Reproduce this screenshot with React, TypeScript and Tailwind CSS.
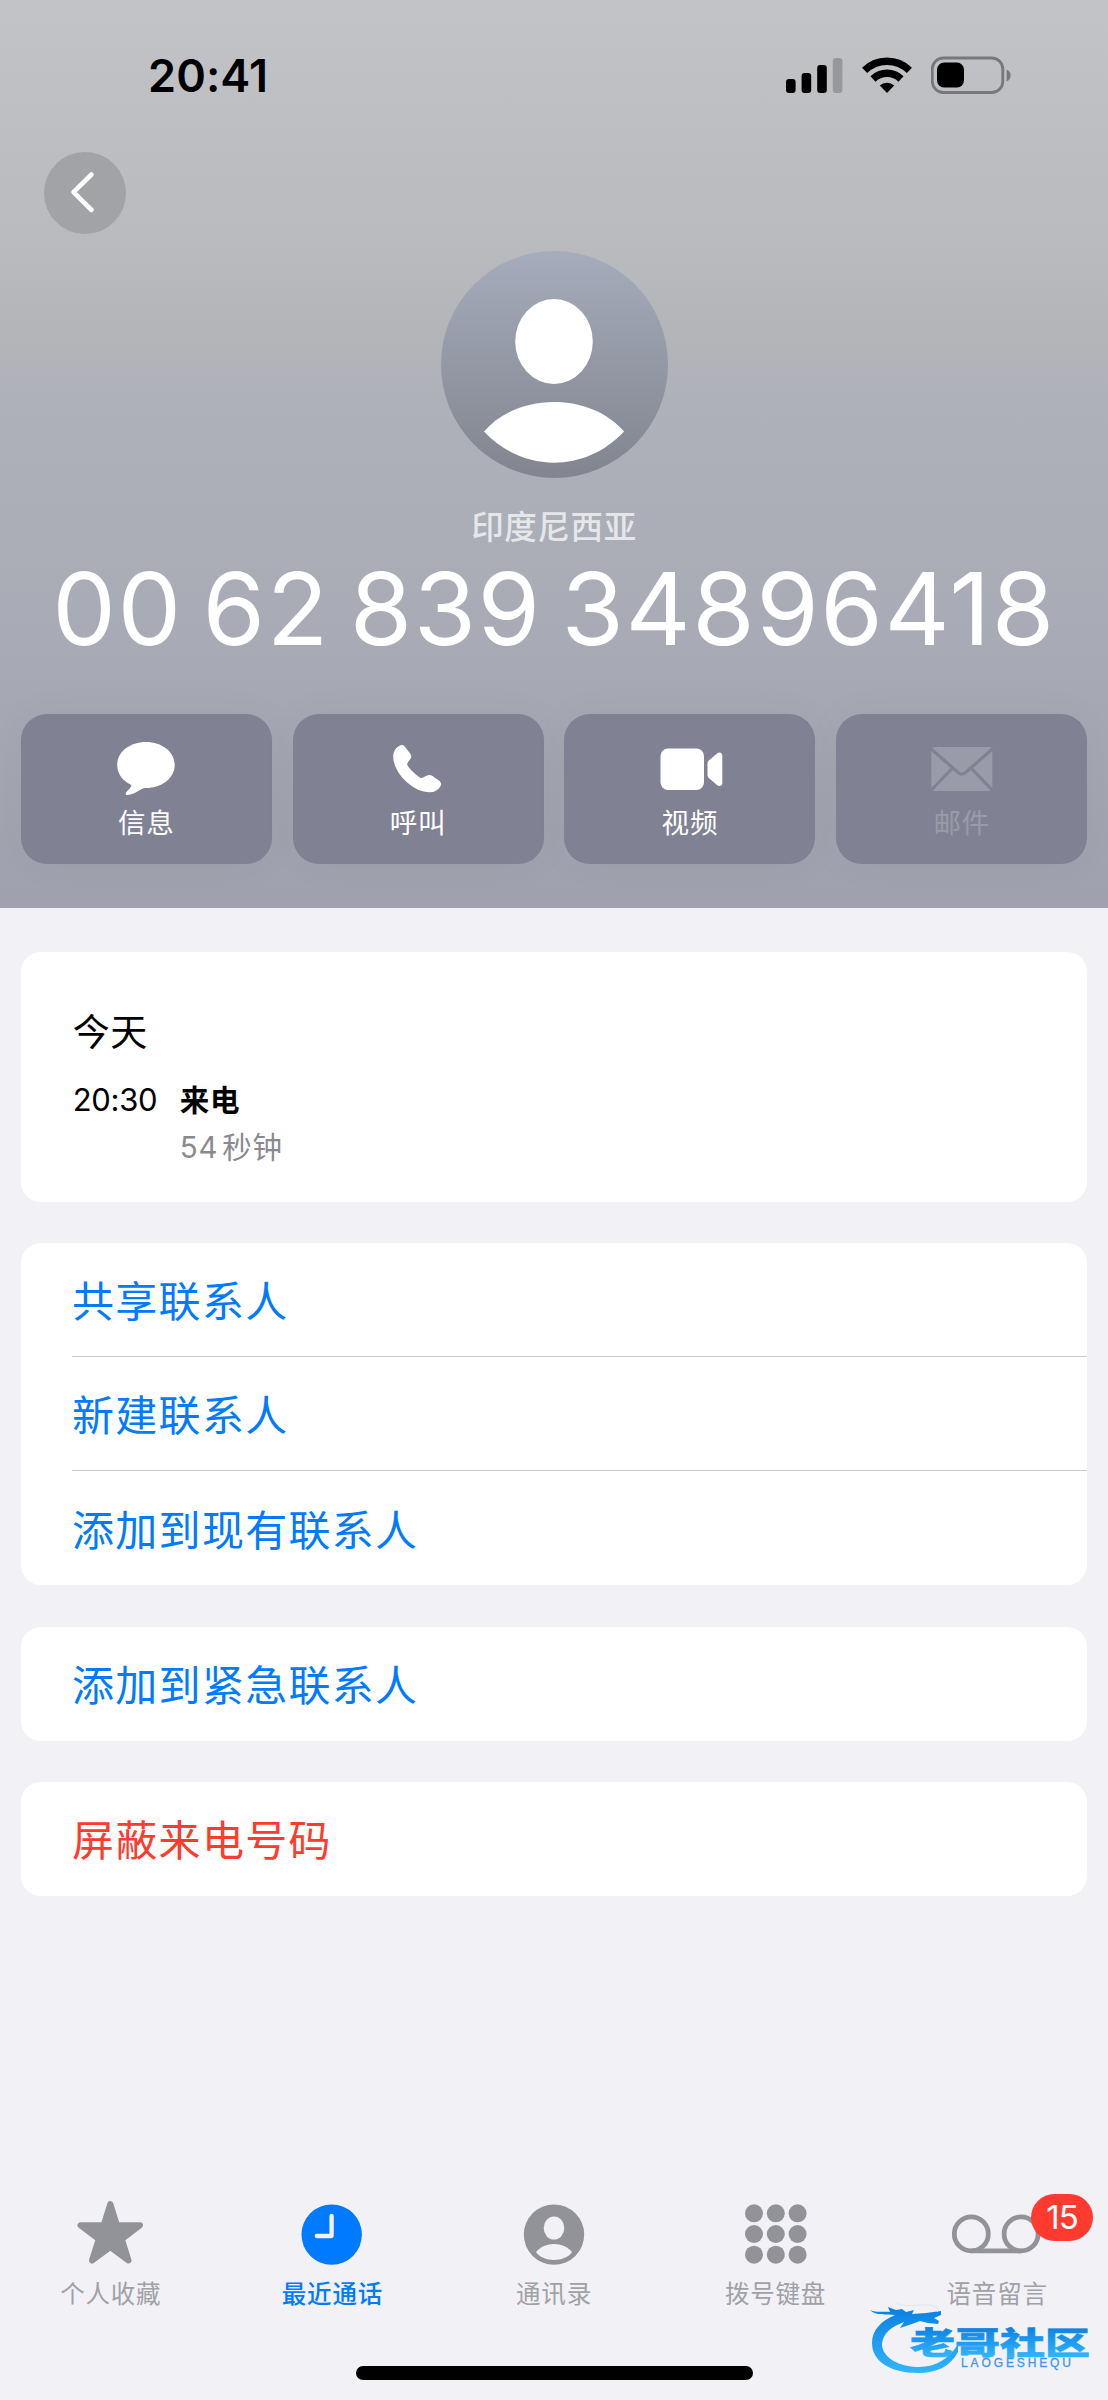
import type { ReactNode } from "react";

function StatusBar() {
  return (
    <div className="flex h-[150px] items-center justify-between pl-[148px] pr-[96px]">
      <span className="pt-px text-[45px] font-semibold leading-none tracking-[0.1px] text-black">
        20:41
      </span>
      <div className="flex items-center">
        {/* signal */}
        <svg width="57" height="36" viewBox="0 0 57 36">
          <rect x="0" y="22" width="9.6" height="14" rx="3" />
          <rect x="15.6" y="16" width="9.6" height="20" rx="3" />
          <rect x="31.2" y="8" width="9.6" height="28" rx="3" />
          <rect x="46.8" y="1" width="9.6" height="35" rx="3" fill="#97989c" />
        </svg>
        {/* wifi */}
        <svg
          className="ml-[19px]"
          width="50"
          height="36"
          viewBox="0 0 50 36"
          fill="none"
          stroke="black"
          strokeWidth="7.4"
        >
          <path d="M2.6 13.4a32 32 0 0 1 44.8 0" />
          <path d="M11 22a20 20 0 0 1 28 0" />
          <path d="M25 36l-7.2-7.4a10.4 10.4 0 0 1 14.4 0z" fill="black" stroke="none" />
        </svg>
        {/* battery */}
        <svg className="ml-[19px]" width="81" height="38" viewBox="0 0 81 38">
          <rect
            x="1.3"
            y="2"
            width="70.5"
            height="34.5"
            rx="11"
            fill="none"
            stroke="#77787b"
            strokeWidth="2.8"
          />
          <rect x="6" y="6.6" width="27" height="25" rx="7" />
          <path d="M75.6 13.5c5.4 2 5.4 10 0 12z" fill="#77787b" />
        </svg>
      </div>
    </div>
  );
}

type ActionProps = { label: string; disabled?: boolean; children: ReactNode };

function Action({ label, disabled, children }: ActionProps) {
  return (
    <button
      className={`flex h-[150px] flex-1 flex-col items-center rounded-[26px] bg-[#808293] pt-[26px] shadow-[0_0_40px_rgba(0,0,0,0.04)] ${
        disabled ? "text-[#999ba8]" : "text-white"
      }`}
    >
      <svg
        className="overflow-visible"
        width="64"
        height="56"
        viewBox="0 0 64 56"
        fill="currentColor"
      >
        {children}
      </svg>
      <span className="mt-[7px] text-[27.5px] leading-10 tracking-[0.8px]">{label}</span>
    </button>
  );
}

function Header() {
  return (
    <header className="h-[908px] bg-[linear-gradient(180deg,#c2c3c7_0%,#b9babe_28%,#b3b4b8_38%,#afb1ba_44%,#a8aab5_70%,#9fa1ae_100%)]">
      <StatusBar />
      {/* back */}
      <div className="pl-11 pt-0.5">
        <button className="flex size-[82px] items-center justify-center rounded-full bg-[#a2a3a7]">
          <svg width="82" height="82" viewBox="0 0 82 82" fill="none">
            <path
              d="M47.5 22.5L29.5 40.2L47.5 58"
              stroke="white"
              strokeWidth="4.6"
              strokeLinecap="round"
              strokeLinejoin="round"
            />
          </svg>
        </button>
      </div>
      {/* contact */}
      <div className="flex flex-col items-center">
        <div className="mt-[17px] size-[227px] rounded-full bg-linear-to-b from-[#a5acbb] to-[#82858f]">
          <svg width="227" height="227" viewBox="0 0 227 227" fill="white">
            <ellipse cx="113" cy="90.5" rx="38.8" ry="42.5" />
            <path d="M43 180.5C76.500 141 149.500 141 183 180.500C144.500 222 81.500 222 43 180.500Z" />
          </svg>
        </div>
        <p className="mt-[30px] text-[32.5px] font-medium leading-10 tracking-[0.6px] text-[#e6e7ea]">
          印度尼西亚
        </p>
        <h1 className="mt-2.5 whitespace-nowrap text-[101px] font-[380] leading-[100px] tracking-[1.5px] [word-spacing:-10px] text-white">
          00 62 839 34896418
        </h1>
      </div>
      {/* actions */}
      <div className="mt-14 flex gap-[20.7px] px-[20.7px]">
        <Action label="信息">
          <path d="M17.4 45C8.5 40.8 3.2 33.8 3.2 25C3.2 12 15.8 2 32 2s28.7 10 28.7 23S48 48 32 48c-1.6 0-2.8 .1-4.2 .9C23 51.7 18.5 54.5 13.7 55c-2.2 .1-2.5-1.4-1.2-2.9C14.3 50 17.5 47.5 17.4 45Z" />
        </Action>
        <Action label="呼叫">
          <path d="M18.5 6.2C17 4.6 15 4.8 13 6C9 8.5 7.2 12 7.2 16.5C7.2 33 27 52.3 43.6 52.3C48.5 52.3 52 50.3 54.3 46.5C55.5 44.5 55.3 42.6 53.5 41L46.5 36C44.5 34.7 42.8 34.8 41 35.6L37 37.6C35.6 38.3 34.7 38.2 33.5 37.2C29 34 24.5 29.8 21.8 26C21 24.8 21 24 21.7 22.7L24.6 18.6C25.6 17 25.4 15.5 24.5 14Z" />
        </Action>
        <Action label="视频">
          <rect x="2.5" y="8.6" width="43.5" height="41.4" rx="7.5" />
          <path d="M49.5 23.5q0-1.7 1.3-2.9L59 13.6q1.5-1.1 3-1t2.3 2.4V43.7q-.5 2.3-2.3 2.4t-3-1L50.8 38q-1.3-1.2-1.3-2.9Z" />
        </Action>
        <Action label="邮件" disabled>
          <rect x="1.3" y="7" width="61" height="44" rx="3" />
          <path
            d="M0 8L27.5 32Q31.8 36.500 36.100 32L63.600 8M22.500 28L0 51.500M41 28L63.600 51.500"
            fill="none"
            stroke="#808293"
            strokeWidth="3.2"
          />
        </Action>
      </div>
    </header>
  );
}

function CallLog() {
  return (
    <section className="h-[250px] rounded-[20px] bg-white px-[52px] pt-[57px] text-black">
      <h2 className="text-[37px] leading-[48px] tracking-[0.5px]">今天</h2>
      <div className="mt-[20.5px] flex leading-[44px]">
        <span className="w-[107px] text-[31px] tracking-[-0.3px]">20:30</span>
        <div className="flex flex-col gap-[3px]">
          <span className="text-[29.5px] font-semibold tracking-[0.8px]">来电</span>
          <span className="text-[29.5px] tracking-[0.8px] text-[#8a8a8e]">
            54<span className="ml-1">秒钟</span>
          </span>
        </div>
      </div>
    </section>
  );
}

function LinkGroup({ items, danger }: { items: string[]; danger?: boolean }) {
  return (
    <ul
      className={`rounded-[20px] bg-white pl-[51.3px] text-[42px] tracking-[1.3px] ${
        danger ? "text-[#ff3b30]" : "text-[#007aff]"
      }`}
    >
      {items.map((item) => (
        <li
          key={item}
          className="flex h-[114px] items-center border-b border-[#c8c8ca] pt-1 last:border-0"
        >
          {item}
        </li>
      ))}
    </ul>
  );
}

type TabProps = { label: string; active?: boolean; wide?: boolean; badge?: string; children: ReactNode };

function Tab({ label, active, wide, badge, children }: TabProps) {
  return (
    <button
      className={`flex flex-1 flex-col items-center ${active ? "text-[#007aff]" : "text-[#929398]"}`}
    >
      <div className="relative">
        <svg
          width={wide ? 92 : 72}
          height="72"
          viewBox={wide ? "0 0 92 72" : "0 0 72 72"}
          fill="currentColor"
        >
          {children}
        </svg>
        {badge && (
          <span className="absolute -top-0.5 left-20 h-[47px] w-[62px] rounded-full bg-[#ff3b30] text-center text-[33px] leading-[46px] tracking-[-0.8px] text-white">
            {badge}
          </span>
        )}
      </div>
      <span
        className={`mt-2.5 text-[24.5px] leading-8 tracking-[0.8px] ${
          active ? "font-medium" : "text-[#a0a1a6]"
        }`}
      >
        {label}
      </span>
    </button>
  );
}

const dots = [17.3, 38, 58.7];

function TabBar() {
  return (
    <nav className="flex">
      <Tab label="个人收藏">
        <path
          d="M35.3 8L42 29.3H65L46.8 43L53.5 64.5L35.3 51L17 64.5L23.800 43L5.500 29.300H28.600Z"
          stroke="currentColor"
          strokeWidth="6"
          strokeLinejoin="round"
        />
      </Tab>
      <Tab label="最近通话" active>
        <circle cx="35.7" cy="38.6" r="30.2" />
        <path
          d="M35.6 20V40H20.8"
          fill="none"
          stroke="#f2f1f6"
          strokeWidth="4.3"
          strokeLinecap="round"
          strokeLinejoin="round"
        />
      </Tab>
      <Tab label="通讯录">
        <circle cx="36" cy="38.6" r="30.2" />
        <ellipse cx="36" cy="32" rx="10.3" ry="11.5" fill="#f2f1f6" />
        <path d="M18 56.3C26 45.2 46 45.2 54 56.3C46 66.6 26 66.6 18 56.3Z" fill="#f2f1f6" />
      </Tab>
      <Tab label="拨号键盘">
        {dots.map((cy) =>
          [14, 35.8, 57.6].map((cx) => <circle key={`${cx}-${cy}`} cx={cx} cy={cy} r="9" />)
        )}
      </Tab>
      <Tab label="语音留言" wide badge="15">
        <g fill="none" stroke="currentColor" strokeWidth="4.8">
          <circle cx="20.3" cy="37.9" r="17" />
          <circle cx="70.1" cy="37.9" r="17" />
          <path d="M20.3 54.900H70.100" />
        </g>
      </Tab>
    </nav>
  );
}

function Watermark() {
  return (
    <div className="absolute left-[868px] top-[2300px] h-[78px] w-[226px]">
      <svg width="226" height="78" viewBox="0 0 226 78">
        <defs>
          <linearGradient id="wave" gradientUnits="userSpaceOnUse" x1="0" y1="6" x2="0" y2="74">
            <stop offset="0" stopColor="#0a7fe0" />
            <stop offset="1" stopColor="#30b6ff" />
          </linearGradient>
          <linearGradient id="word" gradientUnits="userSpaceOnUse" x1="0" y1="26" x2="0" y2="57">
            <stop offset="0" stopColor="#0a7fe0" />
            <stop offset="1" stopColor="#30b6ff" />
          </linearGradient>
        </defs>
        {/* dragon */}
        <g fill="url(#wave)">
          <path d="M2 10C9 13 15 11 22 12L20 7L28 10L34 9L38 12L46 10L44 14L58 13L73 11L73 15L66 18L71 21L70 24L60 23L52 21L44 24L32 28L36 22C23 27 15 33 14 44C14 57 30 67 51 67C68 67 82 58 90 44V52C82 67 68 73 50 73C22 73 4 61 4 43C4 30 13 21 27 15C18 14 8 16 2 10Z" />
          <path
            d="M29 3C35 8 48 4 62 5C69 7 72 9 69 12"
            fill="none"
            stroke="#dfe7f0"
            strokeWidth="1"
          />
        </g>
        <text
          x="42"
          y="53.5"
          textLength="180"
          lengthAdjust="spacingAndGlyphs"
          className="font-['Noto_Sans_CJK_SC',sans-serif] text-[31px] font-black"
          fill="url(#word)"
          stroke="url(#word)"
          strokeWidth="0.6"
        >
          老哥社区
        </text>
        <text
          x="93"
          y="67"
          textLength="110"
          className="font-['Liberation_Sans',sans-serif] text-[12px]"
          fill="#3f97e6"
          stroke="#3f97e6"
          strokeWidth="0.3"
        >
          LAOGESHEQU
        </text>
      </svg>
    </div>
  );
}

export default function App() {
  return (
    <div className="relative flex h-[2400px] w-[1108px] flex-col overflow-hidden bg-[#f2f1f6] font-[Inter,'Noto_Sans_CJK_SC',sans-serif]">
      <Header />
      <main className="flex flex-1 flex-col gap-[41.3px] px-[20.7px] pt-11">
        <CallLog />
        <LinkGroup items={["共享联系人", "新建联系人", "添加到现有联系人"]} />
        <LinkGroup items={["添加到紧急联系人"]} />
        <LinkGroup items={["屏蔽来电号码"]} danger />
      </main>
      <TabBar />
      {/* home indicator */}
      <div className="mx-auto mb-5 mt-14 h-3.5 w-[397px] rounded-full bg-black" />
      <Watermark />
    </div>
  );
}
